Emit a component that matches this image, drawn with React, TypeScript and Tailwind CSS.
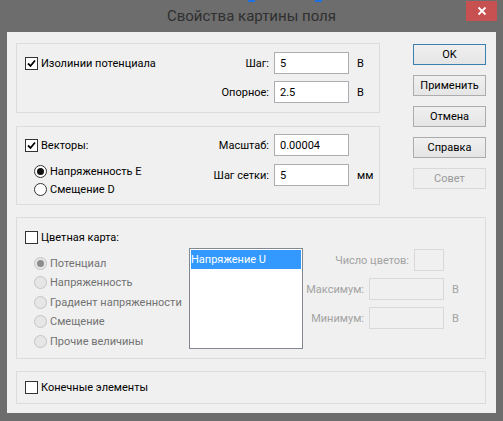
import type { ReactNode } from 'react'

const font = { fontFamily: 'Roboto, "Noto Sans", sans-serif' }

function CheckBox({ checked, label }: { checked?: boolean; label: string }) {
  return (
    <div className="flex items-center gap-[3px]">
      <div className="flex h-[13px] w-[13px] items-center justify-center border border-[#333333] bg-white">
        {checked && (
          <svg width="9" height="9" viewBox="0 0 9 9">
            <path d="M1 4.5 L3.5 7 L8 1.5" fill="none" stroke="#000" strokeWidth="1.8" />
          </svg>
        )}
      </div>
      <span className="whitespace-nowrap text-[11px] leading-none text-black">{label}</span>
    </div>
  )
}

function Radio({ checked, disabled, label }: { checked?: boolean; disabled?: boolean; label: string }) {
  return (
    <div className="flex h-[19.5px] items-center gap-[3px]">
      <div
        className={
          disabled
            ? 'flex h-[13px] w-[13px] items-center justify-center rounded-full border border-[#c4c4c4] bg-[#e6e6e6]'
            : 'flex h-[13px] w-[13px] items-center justify-center rounded-full border border-[#333333] bg-white'
        }
      >
        {checked && (
          <div className={disabled ? 'h-[7px] w-[7px] rounded-full bg-[#8c8c8c]' : 'h-[7px] w-[7px] rounded-full bg-[#111111]'} />
        )}
      </div>
      <span
        className={
          disabled
            ? 'whitespace-nowrap text-[11px] leading-none text-[#727272]'
            : 'whitespace-nowrap text-[11px] leading-none text-black'
        }
      >
        {label}
      </span>
    </div>
  )
}

function Field({ label, value, unit }: { label: string; value: string; unit?: string }) {
  return (
    <div className="flex h-[22px] items-center">
      <span className="w-[69px] whitespace-nowrap text-right text-[11px] leading-none">{label}</span>
      <div className="ml-[5px] flex h-[22px] w-[75px] items-center border border-[#abadb3] bg-white pl-[5px] text-[11px] leading-none">
        {value}
      </div>
      <span className="ml-[8px] w-[22px] text-[11px] leading-none">{unit}</span>
    </div>
  )
}

function Button({ children, primary, disabled }: { children: ReactNode; primary?: boolean; disabled?: boolean }) {
  let cls = 'flex h-[21px] w-[73px] items-center justify-center border text-[11px] leading-none '
  if (primary) cls += 'border-[#3c7fb1] bg-gradient-to-b from-[#f0f0f0] to-[#e5e5e5] text-black'
  else if (disabled) cls += 'border-[#d9d9d9] bg-[#efefef] text-[#9a9a9a]'
  else cls += 'border-[#acacac] bg-gradient-to-b from-[#f0f0f0] to-[#e5e5e5] text-black'
  return <div className={cls}>{children}</div>
}

function DisabledRow({ label, boxW, unit }: { label: string; boxW: string; unit?: string }) {
  return (
    <div className="flex h-[22px] items-center justify-end">
      <span className="whitespace-nowrap text-[11px] leading-none text-[#a3a3a3]">{label}</span>
      <div className={`ml-[5px] h-[22px] ${boxW} border border-[#d9d9d9] bg-[#f0f0f0]`} />
      <span className="w-[41px] pl-[8px] text-[11px] leading-none text-[#a3a3a3]">{unit}</span>
    </div>
  )
}

export default function App() {
  return (
    <div className="relative h-[421px] w-[503px] overflow-hidden bg-[#6d6d6d]" style={font}>
      <div className="absolute left-[248px] top-0 h-[2px] w-[7px] bg-[#1e6fe0]" />
      <div className="absolute left-[315px] top-0 h-[2px] w-[7px] bg-[#1e6fe0]" />

      {/* title bar */}
      <div className="flex h-[32px] items-center">
        <div className="flex-1 pl-[37px] text-center text-[15px] leading-none text-[#303030]">Свойства картины поля</div>
        <div className="mb-[11px] mr-[6px] flex h-[20px] w-[31px] items-center justify-center bg-[#c75050]">
          <svg width="10" height="10" viewBox="0 0 10 10">
            <path d="M1.5 1.5 L8.5 8.5 M8.5 1.5 L1.5 8.5" stroke="#fff" strokeWidth="1.8" />
          </svg>
        </div>
      </div>

      {/* client area */}
      <div className="mx-[7px] h-[381px] bg-[#f0f0f0] pl-[9px] pr-[10px] text-black">
        <div className="flex">
          <div className="mt-[11px] w-[364px]">
            {/* isolines */}
            <div className="flex h-[70px] border border-[#dcdcdc] pt-[8px]">
              <div className="flex-1 pl-[8px]">
                <div className="flex h-[22px] items-center">
                  <CheckBox checked label="Изолинии потенциала" />
                </div>
              </div>
              <div className="flex flex-col gap-[7px]">
                <Field label="Шаг:" value="5" unit="В" />
                <Field label="Опорное:" value="2.5" unit="В" />
              </div>
            </div>

            {/* vectors */}
            <div className="mt-[13px] flex h-[79px] border border-[#dcdcdc] pt-[7px]">
              <div className="flex-1 pl-[8px]">
                <div className="flex h-[22px] items-center">
                  <CheckBox checked label="Векторы:" />
                </div>
                <div className="mt-[6px] pl-[9px]">
                  <Radio checked label="Напряженность E" />
                  <div className="-mt-[1.5px]">
                    <Radio label="Смещение D" />
                  </div>
                </div>
              </div>
              <div className="flex flex-col gap-[8px]">
                <Field label="Масштаб:" value="0.00004" />
                <Field label="Шаг сетки:" value="5" unit="мм" />
              </div>
            </div>
          </div>

          <div className="ml-[33px] mt-[12px] flex flex-col gap-[10px]">
            <Button primary>OK</Button>
            <Button>Применить</Button>
            <Button>Отмена</Button>
            <Button>Справка</Button>
            <Button disabled>Совет</Button>
          </div>
        </div>

        {/* color map */}
        <div className="mt-[12px] h-[142px] border border-[#dcdcdc] pt-[10px]">
          <div className="flex h-[18px] items-center pl-[8px]">
            <CheckBox label="Цветная карта:" />
          </div>
          <div className="mt-[2px] flex">
            <div className="mt-[5.25px] w-[172px] pl-[17px]">
              <Radio checked disabled label="Потенциал" />
              <Radio disabled label="Напряженность" />
              <Radio disabled label="Градиент напряженности" />
              <Radio disabled label="Смещение" />
              <Radio disabled label="Прочие величины" />
            </div>
            <div className="h-[101px] w-[114px] border border-[#828790] bg-white p-[1px]">
              <div className="flex h-[19px] items-center whitespace-nowrap bg-[#3399ff] text-[11px] leading-none text-white">
                Напряжение U
              </div>
            </div>
            <div className="mt-[1px] flex flex-1 flex-col gap-[7px]">
              <DisabledRow label="Число цветов:" boxW="w-[30px]" />
              <DisabledRow label="Максимум:" boxW="w-[75px]" unit="В" />
              <DisabledRow label="Минимум:" boxW="w-[75px]" unit="В" />
            </div>
          </div>
        </div>

        {/* finite elements */}
        <div className="mt-[12px] flex h-[33px] items-center border border-[#dcdcdc] pl-[8px]">
          <CheckBox label="Конечные элементы" />
        </div>
      </div>
    </div>
  )
}
